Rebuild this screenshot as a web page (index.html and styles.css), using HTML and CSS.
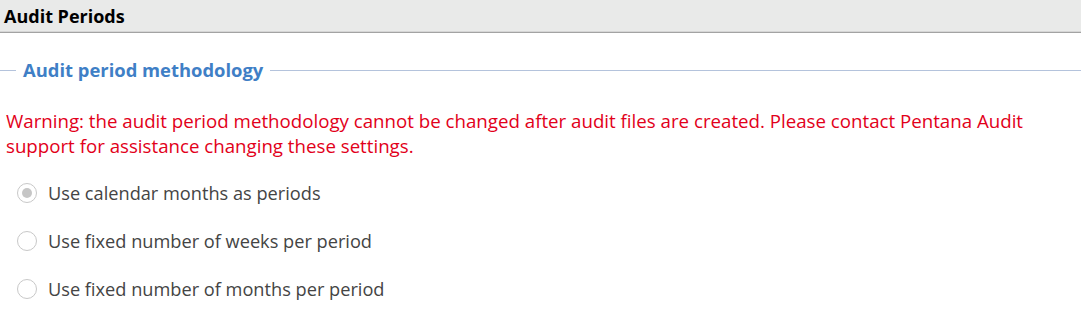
FILE: index.html
```html
<!DOCTYPE html>
<html lang="en">
<head>
  <meta charset="UTF-8">
  <title>Audit Periods</title>
  <link rel="stylesheet" href="styles.css">
</head>
<body>
  <header class="panel-header">
    <h1>Audit Periods</h1>
  </header>

  <section class="group">
    <div class="group-title">
      <span class="rule rule-short"></span>
      <h2>Audit period methodology</h2>
      <span class="rule rule-long"></span>
    </div>

    <p class="warning">Warning: the audit period methodology cannot be changed after audit files are created. Please contact Pentana Audit support for assistance changing these settings.</p>

    <div class="options">
      <label class="option">
        <span class="radio checked"></span>
        <span>Use calendar months as periods</span>
      </label>
      <label class="option">
        <span class="radio"></span>
        <span>Use fixed number of weeks per period</span>
      </label>
      <label class="option">
        <span class="radio"></span>
        <span>Use fixed number of months per period</span>
      </label>
    </div>
  </section>
</body>
</html>
```
FILE: styles.css
```css
body {
  font-family: "Open Sans", "Noto Sans", sans-serif;
  margin: 0;
  padding: 0;
  background-color: white;
  color: #333;
}

.panel-header {
  height: 31px;
  background-color: #e9eae9;
  border-bottom: 1px solid #d6d6d6;
  box-shadow: 0 1px 0 #a3a3a3;
  display: flex;
  align-items: center;
  padding-left: 4px;
}

.panel-header h1 {
  margin: 0;
  font-size: 18px;
  font-weight: bold;
  color: #000;
}

.group {
  padding-top: 26px;
}

.group-title {
  display: flex;
  align-items: center;
  gap: 7px;
}

.group-title h2 {
  margin: 0;
  font-size: 18.4px;
  font-weight: bold;
  color: #3f7fc6;
  line-height: 24px;
}

.rule {
  height: 1px;
  background-color: #b4c3dc;
}

.rule-short {
  width: 16px;
}

.rule-long {
  flex: 1;
}

.warning {
  margin: 26px 0 0;
  padding: 0 20px 0 6px;
  font-size: 18.7px;
  line-height: 25px;
  color: #e2001a;
}

.options {
  margin-top: 24px;
  padding-left: 17px;
  display: flex;
  flex-direction: column;
  gap: 26px;
}

.option {
  display: flex;
  align-items: center;
  gap: 11px;
  font-size: 18.2px;
  line-height: 22px;
  color: #444;
}

.radio {
  width: 18px;
  height: 18px;
  border: 1px solid #c8c8c8;
  border-radius: 50%;
  display: flex;
  align-items: center;
  justify-content: center;
  background-color: white;
}

.radio.checked::after {
  content: "";
  width: 10px;
  height: 10px;
  border-radius: 50%;
  background-color: #c6c6c6;
}
```
